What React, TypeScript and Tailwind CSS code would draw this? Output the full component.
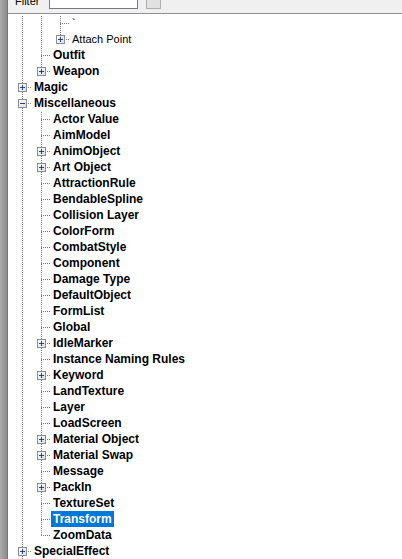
import React from "react";

type Row = {
  level: number;
  label: string;
  bold?: boolean;
  exp?: "plus" | "minus";
  last?: boolean;
  cont: boolean[];
  selected?: boolean;
};

const miscChildren: [string, boolean][] = [
  ["Actor Value", false],
  ["AimModel", false],
  ["AnimObject", true],
  ["Art Object", true],
  ["AttractionRule", false],
  ["BendableSpline", false],
  ["Collision Layer", false],
  ["ColorForm", false],
  ["CombatStyle", false],
  ["Component", false],
  ["Damage Type", false],
  ["DefaultObject", false],
  ["FormList", false],
  ["Global", false],
  ["IdleMarker", true],
  ["Instance Naming Rules", false],
  ["Keyword", true],
  ["LandTexture", false],
  ["Layer", false],
  ["LoadScreen", false],
  ["Material Object", true],
  ["Material Swap", true],
  ["Message", false],
  ["PackIn", true],
  ["TextureSet", false],
  ["Transform", false],
  ["ZoomData", false],
];

const rows: Row[] = [
  { level: 2, label: "`", cont: [true, true] },
  { level: 2, label: "Attach Point", exp: "plus", last: true, cont: [true, true] },
  { level: 1, label: "Outfit", bold: true, cont: [true] },
  { level: 1, label: "Weapon", bold: true, exp: "plus", last: true, cont: [true] },
  { level: 0, label: "Magic", bold: true, exp: "plus", cont: [] },
  { level: 0, label: "Miscellaneous", bold: true, exp: "minus", cont: [] },
  ...miscChildren.map(([label, plus], i) => ({
    level: 1,
    label,
    bold: true,
    exp: plus ? ("plus" as const) : undefined,
    last: i === miscChildren.length - 1,
    cont: [true],
    selected: label === "Transform",
  })),
  { level: 0, label: "SpecialEffect", bold: true, exp: "plus", cont: [] },
];

const DOT = "#7f7f7f";

function VLine({ from, to }: { from: number; to: number }) {
  const dots: React.ReactElement[] = [];
  for (let y = from; y <= to; y += 2) {
    dots.push(<rect key={y} x={9} y={y} width={1} height={1} fill={DOT} />);
  }
  return <>{dots}</>;
}

function AncestorCell({ on }: { on: boolean }) {
  return (
    <svg width={19} height={16} className="shrink-0 block" shapeRendering="crispEdges">
      {on && <VLine from={1} to={15} />}
    </svg>
  );
}

function ConnectorCell({ exp, last }: { exp?: "plus" | "minus"; last?: boolean }) {
  const h: React.ReactElement[] = [];
  const startX = exp ? 15 : 11;
  for (let x = startX; x <= 17; x += 2) {
    h.push(<rect key={x} x={x} y={8} width={1} height={1} fill={DOT} />);
  }
  return (
    <svg width={19} height={16} className="shrink-0 block" shapeRendering="crispEdges">
      <defs>
        <linearGradient id="boxg" x1="0" y1="0" x2="1" y2="1">
          <stop offset="0" stopColor="#ffffff" />
          <stop offset="1" stopColor="#dcdcdc" />
        </linearGradient>
      </defs>
      {exp ? (
        <>
          <VLine from={1} to={3} />
          {!last && <VLine from={13} to={15} />}
        </>
      ) : (
        <>
          <VLine from={1} to={last ? 7 : 15} />
          <rect x={9} y={8} width={1} height={1} fill={DOT} />
        </>
      )}
      {h}
      {exp && (
        <>
          <rect x={5.5} y={4.5} width={8} height={8} fill="url(#boxg)" stroke="#8f8f8f" strokeWidth={1} />
          <rect x={7} y={8} width={5} height={1} fill="#25418f" />
          {exp === "plus" && <rect x={9} y={6} width={1} height={5} fill="#25418f" />}
        </>
      )}
    </svg>
  );
}

function TreeRow({ row }: { row: Row }) {
  const cells: React.ReactElement[] = [];
  for (let i = 0; i < row.level; i++) {
    cells.push(<AncestorCell key={i} on={row.cont[i]} />);
  }
  return (
    <div className="flex h-[16px] items-center">
      {cells}
      <ConnectorCell exp={row.exp} last={row.last} />
      <span
        className={
          "h-[16px] px-[2px] whitespace-nowrap " +
          (row.bold ? "text-[12px] font-bold leading-[16px] " : "text-[11px] font-normal leading-[16px] ") +
          (row.selected ? "bg-[#0078d7] text-white" : "text-black")
        }
      >
        {row.label}
      </span>
    </div>
  );
}

export default function App() {
  return (
    <div
      className="flex h-[559px] w-[402px] overflow-hidden bg-white"
      style={{ fontFamily: '"Liberation Sans", Arial, sans-serif' }}
    >
      <div className="w-[8px] shrink-0 bg-gradient-to-r from-[#ababab] to-[#8d8d8d] border-r border-[#767676]" />
      <div className="flex flex-col flex-1 min-w-0">
        <div className="h-[14px] shrink-0 overflow-hidden bg-[#f0f0f0] border-b border-[#8e8f96] flex items-end pb-[4px]">
          <span className="ml-[7px] mb-[2px] text-[11px] leading-[11px] text-black">Filter</span>
          <div className="ml-[10px] w-[89px] h-[20px] bg-white border border-[#7a7a7a]" />
          <div className="ml-[8px] w-[15px] h-[20px] bg-[#e1e1e1] border border-[#adadad]" />
        </div>
        <div className="pl-[5px] pt-[1px] flex flex-col">
          {rows.map((r, i) => (
            <TreeRow key={i} row={r} />
          ))}
        </div>
      </div>
    </div>
  );
}
